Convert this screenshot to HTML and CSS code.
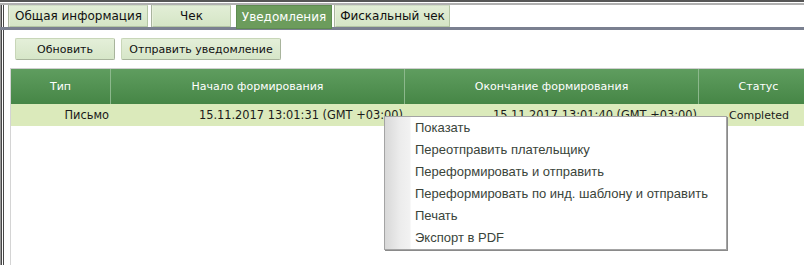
FILE: index.html
```html
<!DOCTYPE html>
<html lang="ru">
<head>
<meta charset="utf-8">
<title>Уведомления</title>
<link rel="stylesheet" href="styles.css">
</head>
<body>
<div class="win">
  <div class="topline"></div>
  <div class="tabs">
    <div class="tab t1">Общая информация</div>
    <div class="tab t2">Чек</div>
    <div class="tab t3 active">Уведомления</div>
    <div class="tab t4">Фискальный чек</div>
  </div>
  <div class="band"></div>
  <div class="panel">
    <div class="toolbar">
      <button class="btn b1">Обновить</button>
      <button class="btn b2">Отправить уведомление</button>
    </div>
    <div class="grid">
      <div class="row head">
        <div class="cell c1">Тип</div>
        <div class="cell c2">Начало формирования</div>
        <div class="cell c3">Окончание формирования</div>
        <div class="cell c4">Статус</div>
      </div>
      <div class="row data">
        <div class="cell c1">Письмо</div>
        <div class="cell c2">15.11.2017 13:01:31 (GMT +03:00)</div>
        <div class="cell c3">15.11.2017 13:01:40 (GMT +03:00)</div>
        <div class="cell c4">Completed</div>
      </div>
    </div>
  </div>
  <div class="menu">
    <div class="gutter"></div>
    <ul class="items">
      <li>Показать</li>
      <li>Переотправить плательщику</li>
      <li>Переформировать и отправить</li>
      <li>Переформировать по инд. шаблону и отправить</li>
      <li>Печать</li>
      <li>Экспорт в PDF</li>
    </ul>
  </div>
</div>
</body>
</html>
```

FILE: styles.css
```css
html, body {
  margin: 0;
  padding: 0;
  background: #fff;
}
body {
  width: 804px;
  height: 265px;
  overflow: hidden;
}
.win {
  position: relative;
  height: 265px;
  box-shadow: inset 1px 0 #9a9a9a, inset 2px 0 #474747, inset 3px 0 #fff, inset 4px 0 #474747;
}
.topline {
  height: 2px;
  background: #555;
  border-bottom: 1px solid #fff;
  box-shadow: 0 2px 0 #b0b0b0;
  margin-bottom: 2px;
}
.tabs {
  display: flex;
  align-items: flex-start;
  height: 22px;
  padding-left: 9px;
  gap: 4px;
  font-family: "DejaVu Sans", Verdana, sans-serif;
  font-size: 12px;
  position: relative;
  z-index: 2;
}
.tab {
  box-sizing: border-box;
  height: 22px;
  display: flex;
  align-items: center;
  justify-content: center;
  background: linear-gradient(#e2eed6, #d5e5c6);
  border: 1px solid #b4c6a4;
  border-top-color: #d0dcc4;
  border-left-color: #e8f0dc;
  box-shadow: -1px 0 0 #a9b49e;
  color: #111;
}
.t1 { width: 139px; }
.t2 { width: 79px; }
.t3 { width: 96px; margin-left: 1px; }
.t4 { width: 115px; margin-left: -1px; }
.tab.active {
  height: 24px;
  background: #6c9c5c;
  border-color: #5e8c50;
  box-shadow: none;
  color: #fff;
}
.band {
  height: 3px;
  background: #7a8090;
}
.panel {
  padding-top: 8px;
  font-family: "DejaVu Sans", Verdana, sans-serif;
}
.toolbar {
  display: flex;
  gap: 6px;
  padding-left: 15px;
  height: 22px;
}
.btn {
  box-sizing: border-box;
  height: 22px;
  margin: 0;
  padding: 0;
  font-family: "DejaVu Sans", Verdana, sans-serif;
  font-size: 11px;
  color: #111;
  background: linear-gradient(#e4efd9, #d6e6c8);
  border: 1px solid #a8b49c;
  border-top-color: #c8d6b8;
  border-left-color: #c8d6b8;
  border-radius: 2px;
}
.b1 { width: 100px; }
.b2 { width: 160px; }
.grid {
  margin-top: 8px;
  margin-left: 10px;
  width: 820px;
  height: 200px;
  border-top: 1px solid #cfcfcf;
  border-left: 1px solid #d4d4d4;
  font-size: 11px;
}
.row {
  display: grid;
  grid-template-columns: 100px 294px 294px 120px;
}
.head {
  height: 35px;
  background: linear-gradient(#5f9d5f, #468646);
  color: #fff;
}
.head .cell {
  display: flex;
  align-items: center;
  justify-content: center;
  border-right: 1px solid #8cb88c;
}
.data {
  height: 22px;
  background: #dbeabb;
  color: #1a1a1a;
  font-size: 11.4px;
}
.data .cell {
  display: flex;
  align-items: center;
  justify-content: flex-end;
  padding-right: 2px;
}
.data .c4 {
  justify-content: center;
  padding-right: 0;
  font-size: 11px;
}
.cell {
  box-sizing: border-box;
  white-space: nowrap;
}
.menu {
  position: absolute;
  left: 384px;
  top: 116px;
  width: 341px;
  height: 132px;
  background: #fff;
  border: 1px solid #a4a4a4;
  box-shadow: 1px 1px 0 #8a8a8a;
  display: flex;
  z-index: 5;
}
.gutter {
  width: 25px;
  background: linear-gradient(to right, #d8d8d8, #ececec 60%, #f2f2f2);
  border-right: 1px solid #f8f8f8;
}
.items {
  list-style: none;
  margin: 0;
  padding: 0 0 0 4px;
  font-family: "Liberation Sans", Arial, sans-serif;
  font-size: 13px;
  color: #3a443a;
}
.items li {
  height: 22px;
  line-height: 22px;
  white-space: nowrap;
}
```
